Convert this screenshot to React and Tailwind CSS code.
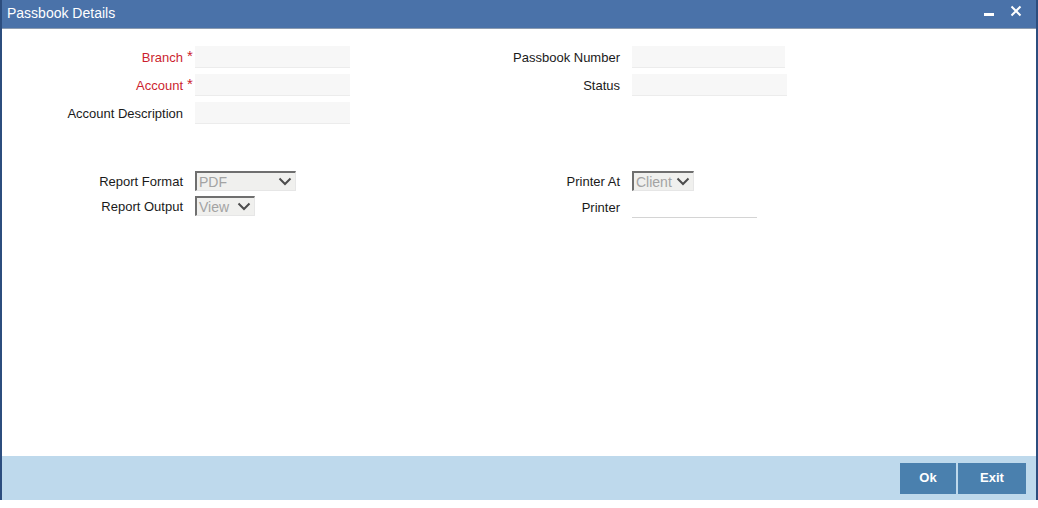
import React from 'react'

function Field({ label, required, inputWidth = 'w-[155px]', labelWidth = 'w-[183px]' }) {
  return (
    <div className="flex items-center h-[22px]">
      <div
        className={`${labelWidth} text-right text-[13px] pt-[1px] ${required ? 'text-[#cc1f2f]' : 'text-[#1a1a1a]'}`}
      >
        {label}
      </div>
      <div className="w-[12px] h-full text-[#cc1f2f] text-[15px] leading-none pl-[4px] pt-[2px]">
        {required ? '*' : ''}
      </div>
      <div className={`${inputWidth} h-full bg-[#f7f7f7] border-b border-[#ececec]`} />
    </div>
  )
}

function Select({ label, value, width, labelWidth = 'w-[183px]' }) {
  return (
    <div className="flex items-center h-[20px]">
      <div className={`${labelWidth} text-right text-[13px] text-[#1a1a1a] pt-[2px]`}>{label}</div>
      <div className="w-[12px]" />
      <div
        className={`${width} h-full flex items-center justify-between bg-[#f0f0ee] border-t-2 border-l-2 border-t-[#6f6f6f] border-l-[#6f6f6f] border-b border-r border-b-[#e6e6e6] border-r-[#e6e6e6] pl-[2px] pr-[3px]`}
      >
        <span className="text-[14px] text-[#a3a3a3] leading-none">{value}</span>
        <svg width="14" height="9" viewBox="0 0 14 9">
          <path d="M1.5 1.5 L7 7 L12.5 1.5" fill="none" stroke="#4d4d4d" strokeWidth="2" />
        </svg>
      </div>
    </div>
  )
}

export default function App() {
  return (
    <div
      className="w-[1038px] h-[508px] bg-white"
      style={{ fontFamily: '"Liberation Sans", Arial, sans-serif' }}
    >
      <div className="h-[500px] flex flex-col border-l-2 border-r-2 border-[#2c4d7e]">
        <div className="h-[29px] bg-[#4a72a9] border-b border-[#8b9bb0] flex items-center justify-between pl-[5px] pr-[14px]">
          <span className="text-white text-[14px] -mt-[1px]">Passbook Details</span>
          <div className="flex items-center gap-[16px] -mt-[6px]">
            <svg width="10" height="4" viewBox="0 0 10 4" className="mt-[8px]">
              <rect x="0" y="0" width="10" height="3" fill="white" />
            </svg>
            <svg width="12" height="12" viewBox="0 0 12 12">
              <path d="M1.5 1.5 L10.5 10.5 M10.5 1.5 L1.5 10.5" stroke="white" strokeWidth="2" />
            </svg>
          </div>
        </div>

        <div className="flex-1 pt-[17px]">
          <div className="flex">
            <div className="w-[435px] flex flex-col gap-[6px]">
              <Field label="Branch" required labelWidth="w-[181px]" />
              <Field label="Account" required labelWidth="w-[181px]" />
              <Field label="Account Description" labelWidth="w-[181px]" />
            </div>
            <div className="flex flex-col gap-[6px]">
              <Field label="Passbook Number" inputWidth="w-[153px]" />
              <Field label="Status" inputWidth="w-[155px]" />
            </div>
          </div>

          <div className="flex mt-[47px]">
            <div className="w-[435px] flex flex-col gap-[5px]">
              <Select label="Report Format" value="PDF" width="w-[101px]" labelWidth="w-[181px]" />
              <Select label="Report Output" value="View" width="w-[60px]" labelWidth="w-[181px]" />
            </div>
            <div className="flex flex-col gap-[5px]">
              <Select label="Printer At" value="Client" width="w-[62px]" />
              <div className="flex items-center h-[22px]">
                <div className="w-[183px] text-right text-[13px] text-[#1a1a1a] pt-[1px]">Printer</div>
                <div className="w-[12px]" />
                <div className="w-[125px] h-full border-b border-[#d4d4d4]" />
              </div>
            </div>
          </div>
        </div>

        <div className="h-[44px] bg-[#bed9ec] flex items-center justify-end pr-[10px]">
          <div className="flex gap-[2px]">
            <button className="w-[56px] h-[31px] bg-[#4a80ae] text-white text-[13px] font-bold">Ok</button>
            <button className="w-[68px] h-[31px] bg-[#4a80ae] text-white text-[13px] font-bold">Exit</button>
          </div>
        </div>
      </div>
    </div>
  )
}
